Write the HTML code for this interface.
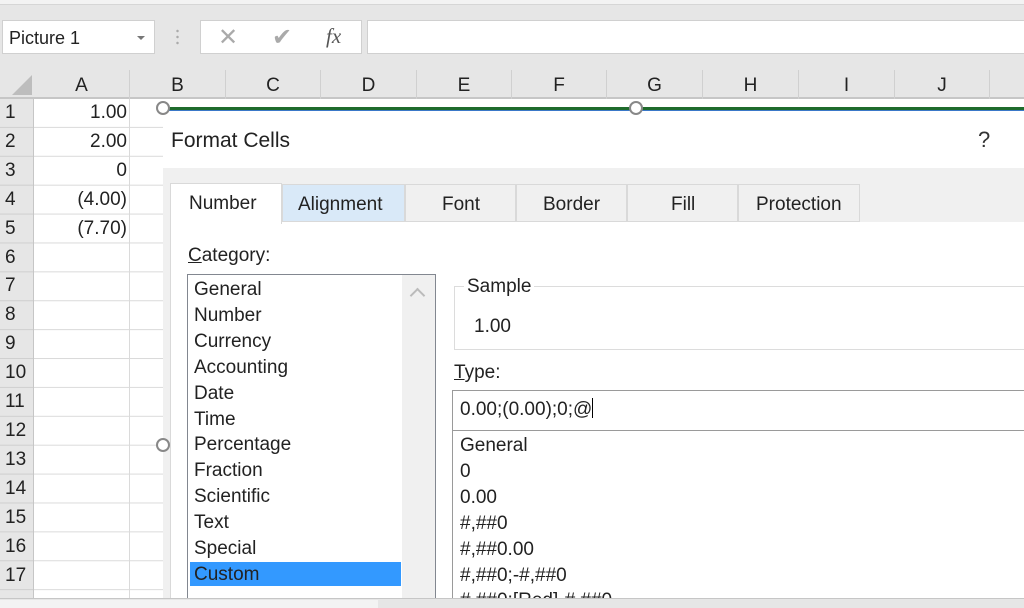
<!DOCTYPE html>
<html><head><style>
*{margin:0;padding:0;box-sizing:border-box}
html{width:1024px;height:608px;overflow:hidden}
body{width:1024px;height:608px;overflow:hidden;background:#e6e6e6;font-family:"Liberation Sans",sans-serif;position:relative;color:#222}
.a{position:absolute}
.t{font-size:18px;line-height:26px;white-space:nowrap}
</style></head><body>
<div class="a" style="left:0;top:0;width:1024px;height:5px;background:#f3f3f3;border-bottom:1px solid #d6d6d6"></div>
<div class="a" style="left:2px;top:20px;width:153px;height:34px;background:#fff;border:1px solid #d0d0d0"></div>
<div class="a t" style="left:9px;top:25px;font-size:18px">Picture 1</div>
<div class="a" style="left:137px;top:36px;border:4px solid transparent;border-top:4px solid #777"></div>
<div class="a" style="left:176px;top:28px;width:3px;height:18px;background:radial-gradient(circle,#aaa 1px,transparent 1.5px) 0 0/3px 6px"></div>
<div class="a" style="left:200px;top:20px;width:162px;height:34px;background:#fff;border:1px solid #d0d0d0"></div>
<div class="a" style="left:218px;top:23px;font-size:24px;color:#aaa">✕</div>
<div class="a" style="left:272px;top:23px;font-size:24px;color:#aaa">✔</div>
<div class="a" style="left:326px;top:24px;font-size:21px;font-style:italic;font-family:'Liberation Serif',serif;color:#555">fx</div>
<div class="a" style="left:367px;top:20px;width:670px;height:34px;background:#fff;border:1px solid #d0d0d0"></div>
<div class="a" style="left:0;top:70px;width:1024px;height:29px;border-bottom:2px solid #c6c6c6"></div>
<div class="a" style="left:12px;top:75px;width:0;height:0;border-left:20px solid transparent;border-bottom:20px solid #bdbdbd"></div>
<div class="a" style="left:34px;top:70px;width:990px;height:29px;display:flex;font-size:19px;text-align:center;line-height:32px">
<div style="width:96px;border-right:1px solid #d0d0d0">A</div><div style="width:96px;border-right:1px solid #d0d0d0">B</div><div style="width:95px;border-right:1px solid #d0d0d0">C</div><div style="width:96px;border-right:1px solid #d0d0d0">D</div><div style="width:95px;border-right:1px solid #d0d0d0">E</div><div style="width:95px;border-right:1px solid #d0d0d0">F</div><div style="width:96px;border-right:1px solid #d0d0d0">G</div><div style="width:96px;border-right:1px solid #d0d0d0">H</div><div style="width:96px;border-right:1px solid #d0d0d0">I</div><div style="width:95px;border-right:1px solid #d0d0d0">J</div></div>
<div class="a" style="left:34px;top:99px;width:129px;height:500px;background:#fff;background-image:linear-gradient(transparent 27.9px,#dadada 27.9px);background-size:100% 28.9px"></div>
<div class="a" style="left:129px;top:99px;width:1px;height:500px;background:#dadada"></div>
<div class="a" style="left:163px;top:99px;width:861px;height:10px;background:#fff"></div>
<div class="a" style="left:0;top:99px;width:34px;height:500px;background:#e6e6e6;background-image:linear-gradient(transparent 27.9px,#cfcfcf 27.9px);background-size:100% 28.9px;border-right:1px solid #c6c6c6"></div>
<div class="a" style="left:5px;top:99px;font-size:19px;line-height:28.9px">1<br>2<br>3<br>4<br>5<br>6<br>7<br>8<br>9<br>10<br>11<br>12<br>13<br>14<br>15<br>16<br>17</div>
<div class="a" style="left:34px;top:99px;width:93px;font-size:19px;line-height:28.9px;text-align:right">1.00<br>2.00<br>0<br>(4.00)<br>(7.70)</div>
<!-- dialog -->
<div class="a" style="left:163px;top:107px;width:861px;height:4px;background:#1f6b2c;border-bottom:1px solid #3a78c8"></div>
<div class="a" style="left:163px;top:111px;width:861px;height:497px;background:#fff"></div>
<div class="a" style="left:163px;top:168px;width:861px;height:440px;background:#f0f0f0"></div>
<div class="a t" style="left:171px;top:128px;font-size:21px">Format Cells</div>
<div class="a t" style="left:978px;top:127px;font-size:22px;color:#333">?</div>
<div class="a" style="left:170px;top:222px;width:854px;height:386px;background:#fff;border-left:1px solid #d9d9d9"></div>
<div class="a" style="left:170px;top:183px;width:112px;height:41px;background:#fff;border:1px solid #d9d9d9;border-bottom:none"></div>
<div class="a" style="left:282px;top:184px;width:123px;height:38px;background:#d9e9f8;border:1px solid #d9d9d9"></div>
<div class="a" style="left:405px;top:184px;width:111px;height:38px;border:1px solid #d9d9d9"></div>
<div class="a" style="left:516px;top:184px;width:111px;height:38px;border:1px solid #d9d9d9"></div>
<div class="a" style="left:627px;top:184px;width:111px;height:38px;border:1px solid #d9d9d9"></div>
<div class="a" style="left:738px;top:184px;width:122px;height:38px;border:1px solid #d9d9d9"></div>
<div class="a t" style="left:189px;top:191px;font-size:19px">Number</div>
<div class="a t" style="left:298px;top:192px;font-size:19px">Alignment</div>
<div class="a t" style="left:442px;top:192px;font-size:19px">Font</div>
<div class="a t" style="left:543px;top:192px;font-size:19px">Border</div>
<div class="a t" style="left:671px;top:192px;font-size:19px">Fill</div>
<div class="a t" style="left:756px;top:192px;font-size:19px">Protection</div>
<div class="a t" style="left:188px;top:243px;font-size:19px"><u>C</u>ategory:</div>
<div class="a" style="left:187px;top:274px;width:249px;height:340px;background:#fff;border:1px solid #828790"></div>
<div class="a" style="left:402px;top:275px;width:33px;height:333px;background:#f0f0f0"></div>
<div class="a" style="left:412px;top:290px;width:11px;height:11px;border-left:2px solid #bbb;border-top:2px solid #bbb;transform:rotate(45deg)"></div>
<div class="a" style="left:190px;top:562px;width:211px;height:24px;background:#3399ff"></div>
<div class="a" style="left:194px;top:277px;font-size:19px;line-height:25.9px">General<br>Number<br>Currency<br>Accounting<br>Date<br>Time<br>Percentage<br>Fraction<br>Scientific<br>Text<br>Special<br>Custom</div>
<div class="a" style="left:454px;top:286px;width:580px;height:64px;border:1px solid #dcdcdc"></div>
<div class="a t" style="left:464px;top:274px;background:#fff;padding:0 3px;font-size:19px">Sample</div>
<div class="a t" style="left:474px;top:314px;font-size:19px">1.00</div>
<div class="a t" style="left:454px;top:360px;font-size:19px"><u>T</u>ype:</div>
<div class="a" style="left:452px;top:390px;width:580px;height:41px;border:1px solid #9a9a9a"></div>
<div class="a t" style="left:460px;top:397px;font-size:19px">0.00;(0.00);0;@<span style="display:inline-block;width:1px;height:20px;background:#000;vertical-align:-3px"></span></div>
<div class="a" style="left:452px;top:430px;width:580px;height:190px;border:1px solid #9a9a9a"></div>
<div class="a" style="left:460px;top:433px;font-size:19px;line-height:25.9px">General<br>0<br>0.00<br>#,##0<br>#,##0.00<br>#,##0;-#,##0<br>#,##0;[Red]-#,##0</div>
<div class="a" style="left:0;top:598px;width:1024px;height:10px;background:#e6e6e6;border-top:1px solid #c6c6c6"></div>
<div class="a" style="left:0;top:600px;width:378px;height:8px;background:#f3f3f3"></div>
<div class="a" style="left:156px;top:101px;width:14px;height:14px;border-radius:50%;background:#fff;border:2px solid #888"></div>
<div class="a" style="left:629px;top:101px;width:14px;height:14px;border-radius:50%;background:#fff;border:2px solid #888"></div>
<div class="a" style="left:156px;top:438px;width:14px;height:14px;border-radius:50%;background:#fff;border:2px solid #888"></div>
</body></html>
